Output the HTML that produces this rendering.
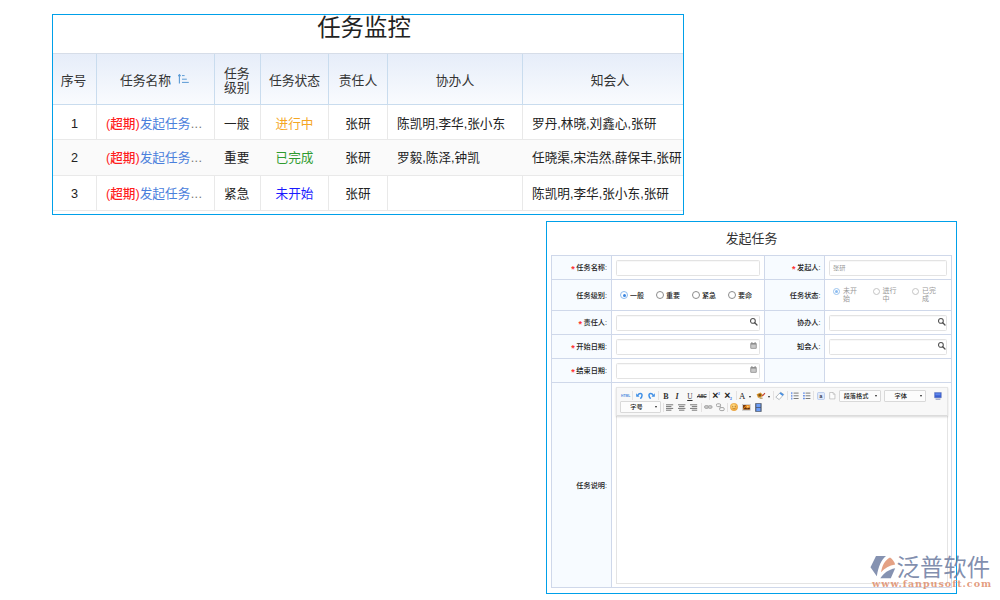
<!DOCTYPE html>
<html lang="zh-CN">
<head>
<meta charset="utf-8">
<title>任务监控</title>
<style>
*{box-sizing:border-box;margin:0;padding:0}
html,body{width:1000px;height:600px;overflow:hidden;background:#fff}
body{position:relative;font-family:"Liberation Sans","Noto Sans CJK SC",sans-serif;color:#333}
.abs{position:absolute}
/* ---------- monitor box ---------- */
#mon{position:absolute;left:52px;top:14px;width:632px;height:201px;border:1px solid #00a0e9;background:#fff;overflow:hidden}
#mon .title{position:absolute;left:0;top:0;width:622px;height:38px;text-align:center;font-size:23.4px;line-height:27px;color:#222;white-space:nowrap}
#mon .hd{position:absolute;left:0;top:38px;width:700px;height:52px;background:linear-gradient(#e6edf9,#f9fbfe);border-top:1px solid #d6dde8;border-bottom:1px solid #c9dcee}
#mon .hc{position:absolute;top:40px;height:51px;font-size:12.8px;line-height:15px;color:#333;display:flex;align-items:center;justify-content:center;text-align:center;white-space:nowrap}
#mon .vl{position:absolute;top:39px;width:1px;height:51px;background:#c9dcee}
#mon .vr{position:absolute;top:90px;width:1px;height:106px;background:#e9e9e9}
#mon .row{position:absolute;left:0;width:700px;height:35px;border-bottom:1px solid #e9e9e9}
#mon .c{position:absolute;height:35px;line-height:36px;font-size:12.65px;white-space:nowrap;color:#222}
#mon .r1 .c{line-height:38px}
#mon .ctr{text-align:center}
.red{color:#ff1f1f;font-weight:500}
.lnk{color:#4a80dc}
.el{color:#777;letter-spacing:.3px;margin-left:.5px}

/* ---------- form panel ---------- */
#fm{position:absolute;left:546px;top:221px;width:411px;height:373px;border:1px solid #00a0e9;background:#fff}
.ft{position:absolute;left:547px;top:222px;width:409px;height:33px;text-align:center;font-size:12.9px;line-height:33px;color:#333}
.hl{position:absolute;left:551px;width:401px;height:1px;background:#cfd8ea}
.vv{position:absolute;width:1px;background:#cfd8ea}
.lb{position:absolute;background:#f7fbff}
.lt{position:absolute;font-size:7.2px;line-height:10px;text-align:right;white-space:nowrap;color:#222;font-weight:500}
.lt i{font-style:normal;color:#f33;margin-right:1.5px;font-size:9px;font-weight:bold;line-height:5px;position:relative;top:1.8px}
.ip{position:absolute;height:16px;border:1px solid #e3e3e3;border-radius:1.5px;background:#fff;box-shadow:inset 0 1px 1px rgba(0,0,0,.03)}
.rd{position:absolute;width:8px;height:8px;border:1px solid #8c8c8c;border-radius:50%;background:#fff}
.rd.on{border-color:#8dbbee}
.rd.on::after{content:"";position:absolute;left:1.5px;top:1.5px;width:3px;height:3px;border-radius:50%;background:#3b86e0}
.rd.dis{border-color:#c4c4c4;width:7px;height:7px}
.rd.dis.on{border-color:#9cc4ee}
.rd.dis.on::after{background:#8dbcf0;left:1px;top:1px}
.rl{position:absolute;font-size:7px;line-height:8px;white-space:nowrap;color:#222;font-weight:500}
.rl.g{color:#999;font-weight:400;line-height:8.4px}

/* ---------- editor ---------- */
#ed{position:absolute;left:616px;top:387px;width:332px;height:197px;border:1px solid #e4e4e4;background:#fff}
#tb{position:absolute;left:616px;top:387px;width:332px;height:29px;background:#f8f8f8;border:1px solid #e6e6e6;border-bottom-color:#dcdcdc;box-shadow:0 1px 2px rgba(0,0,0,.16)}
.sp{position:absolute;width:1px;height:9px;background:#e3e1e1}
.tx{position:absolute;white-space:nowrap;color:#222;line-height:10px;height:10px}
.sf{font-family:"Liberation Serif","Noto Serif CJK SC",serif}
.dd{position:absolute;height:12px;border:1px solid #d9d9d9;background:#fcfcfc;border-radius:1px}
.dd b{position:absolute;top:0;left:0;right:8px;text-align:center;font-size:6.2px;line-height:10px;font-weight:500;color:#222;white-space:nowrap}
.dd i{position:absolute;right:3px;top:4px;width:0;height:0;border-left:1.6px solid transparent;border-right:1.6px solid transparent;border-top:2px solid #222}
.ar{position:absolute;width:0;height:0;border-left:1.6px solid transparent;border-right:1.6px solid transparent;border-top:2px solid #222}
</style>
</head>
<body>

<div id="mon">
  <div class="title">任务监控</div>
  <div class="hd"></div>
  <div class="hc" style="left:0;width:41px">序号</div>
  <div class="hc" style="left:44px;width:97px">任务名称</div>
  <svg class="abs" style="left:125px;top:59px" width="12" height="10" viewBox="0 0 12 10"><path d="M1.4 0.6V9.4M0.2 2.1 1.4 0.6 2.6 2.1" stroke="#5b9bd5" stroke-width="1.1" fill="none"/><path d="M4 1.6h2.6M4 5.2h4.8M4 8.4h6.8" stroke="#5b9bd5" stroke-width="1" fill="none"/></svg>
  <div class="hc" style="left:162px;width:45px;justify-content:flex-start;padding-left:9px;text-align:left;line-height:14px">任务<br>级别</div>
  <div class="hc" style="left:208px;width:67px">任务状态</div>
  <div class="hc" style="left:276px;width:58px">责任人</div>
  <div class="hc" style="left:335px;width:134px">协办人</div>
  <div class="hc" style="left:470px;width:174px">知会人</div>
  <div class="vl" style="left:43px"></div><div class="vl" style="left:161px"></div><div class="vl" style="left:207px"></div><div class="vl" style="left:275px"></div><div class="vl" style="left:334px"></div><div class="vl" style="left:469px"></div>
  <div class="vr" style="left:43px"></div><div class="vr" style="left:161px"></div><div class="vr" style="left:207px"></div><div class="vr" style="left:275px"></div><div class="vr" style="left:334px"></div><div class="vr" style="left:469px"></div>

  <div class="row r1" style="top:90px">
    <div class="c ctr" style="left:0;width:43px">1</div>
    <div class="c" style="left:53px"><span class="red">(超期)</span><span class="lnk">发起任务</span><span class="el">...</span></div>
    <div class="c" style="left:171px">一般</div>
    <div class="c ctr" style="left:208px;width:67px;color:#f5a623">进行中</div>
    <div class="c ctr" style="left:276px;width:58px">张研</div>
    <div class="c" style="left:344px">陈凯明,李华,张小东</div>
    <div class="c" style="left:479px">罗丹,林晓,刘鑫心,张研</div>
  </div>
  <div class="row" style="top:125px;height:36px;background:#fafafa">
    <div class="c ctr" style="left:0;width:43px">2</div>
    <div class="c" style="left:53px"><span class="red">(超期)</span><span class="lnk">发起任务</span><span class="el">...</span></div>
    <div class="c" style="left:171px">重要</div>
    <div class="c ctr" style="left:208px;width:67px;color:#2e9a2e">已完成</div>
    <div class="c ctr" style="left:276px;width:58px">张研</div>
    <div class="c" style="left:344px">罗毅,陈泽,钟凯</div>
    <div class="c" style="left:479px">任晓渠,宋浩然,薛保丰,张研</div>
  </div>
  <div class="row" style="top:161px">
    <div class="c ctr" style="left:0;width:43px">3</div>
    <div class="c" style="left:53px"><span class="red">(超期)</span><span class="lnk">发起任务</span><span class="el">...</span></div>
    <div class="c" style="left:171px">紧急</div>
    <div class="c ctr" style="left:208px;width:67px;color:#1a1aff">未开始</div>
    <div class="c ctr" style="left:276px;width:58px">张研</div>
    <div class="c" style="left:344px"></div>
    <div class="c" style="left:479px">陈凯明,李华,张小东,张研</div>
  </div>
</div>


<div id="fm"></div>
<div class="ft">发起任务</div>

<!-- label backgrounds -->
<div class="lb" style="left:552px;top:256px;width:59px;height:331px"></div>
<div class="lb" style="left:765px;top:256px;width:59px;height:126px"></div>
<!-- grid lines -->
<div class="hl" style="top:255px"></div>
<div class="hl" style="top:279px"></div>
<div class="hl" style="top:310px"></div>
<div class="hl" style="top:334px"></div>
<div class="hl" style="top:358px"></div>
<div class="hl" style="top:382px"></div>
<div class="hl" style="top:587px"></div>
<div class="vv" style="left:551px;top:255px;height:333px"></div>
<div class="vv" style="left:611px;top:255px;height:333px"></div>
<div class="vv" style="left:764px;top:255px;height:128px"></div>
<div class="vv" style="left:824px;top:255px;height:128px"></div>
<div class="vv" style="left:951px;top:255px;height:333px"></div>

<!-- left labels -->
<div class="lt" style="left:552px;width:55px;top:262.8px"><i>*</i>任务名称:</div>
<div class="lt" style="left:552px;width:55px;top:290.8px">任务级别:</div>
<div class="lt" style="left:552px;width:55px;top:318.3px"><i>*</i>责任人:</div>
<div class="lt" style="left:552px;width:55px;top:342.3px"><i>*</i>开始日期:</div>
<div class="lt" style="left:552px;width:55px;top:366.3px"><i>*</i>结束日期:</div>
<div class="lt" style="left:552px;width:55px;top:480.8px">任务说明:</div>
<!-- right labels -->
<div class="lt" style="left:765px;width:55.5px;top:262.8px"><i>*</i>发起人:</div>
<div class="lt" style="left:765px;width:55.5px;top:290.8px">任务状态:</div>
<div class="lt" style="left:765px;width:55.5px;top:318.3px">协办人:</div>
<div class="lt" style="left:765px;width:55.5px;top:342.3px">知会人:</div>

<!-- inputs -->
<div class="ip" style="left:616px;top:260px;width:144px"></div>
<div class="ip" style="left:616px;top:315px;width:144px"></div>
<div class="ip" style="left:616px;top:339px;width:144px"></div>
<div class="ip" style="left:616px;top:363px;width:144px"></div>
<div class="ip" style="left:829px;top:260px;width:118px"><span style="position:absolute;left:3px;top:2px;font-size:6.2px;line-height:10px;color:#999">张研</span></div>
<div class="ip" style="left:829px;top:315px;width:118px"></div>
<div class="ip" style="left:829px;top:339px;width:118px"></div>

<!-- input icons -->
<svg class="abs" style="left:749px;top:317px" width="10" height="10" viewBox="0 0 10 10"><circle cx="3.9" cy="3.9" r="2.4" fill="none" stroke="#505050" stroke-width="1.05"/><path d="M5.7 5.7L8 8" stroke="#505050" stroke-width="1.25" stroke-linecap="round"/></svg>
<svg class="abs" style="left:936.5px;top:317px" width="10" height="10" viewBox="0 0 10 10"><circle cx="3.9" cy="3.9" r="2.4" fill="none" stroke="#505050" stroke-width="1.05"/><path d="M5.7 5.7L8 8" stroke="#505050" stroke-width="1.25" stroke-linecap="round"/></svg>
<svg class="abs" style="left:936.5px;top:341px" width="10" height="10" viewBox="0 0 10 10"><circle cx="3.9" cy="3.9" r="2.4" fill="none" stroke="#505050" stroke-width="1.05"/><path d="M5.7 5.7L8 8" stroke="#505050" stroke-width="1.25" stroke-linecap="round"/></svg>
<svg class="abs" style="left:750px;top:342px" width="7" height="7" viewBox="0 0 7 7"><rect x="0.3" y="1" width="6.4" height="5.7" rx="0.8" fill="#8f8f8f"/><rect x="1.2" y="2.6" width="4.6" height="3.3" fill="#c9c9c9"/><rect x="1.4" y="0" width="1" height="1.8" fill="#8f8f8f"/><rect x="4.6" y="0" width="1" height="1.8" fill="#8f8f8f"/></svg>
<svg class="abs" style="left:750px;top:366px" width="7" height="7" viewBox="0 0 7 7"><rect x="0.3" y="1" width="6.4" height="5.7" rx="0.8" fill="#8f8f8f"/><rect x="1.2" y="2.6" width="4.6" height="3.3" fill="#c9c9c9"/><rect x="1.4" y="0" width="1" height="1.8" fill="#8f8f8f"/><rect x="4.6" y="0" width="1" height="1.8" fill="#8f8f8f"/></svg>

<!-- radios: level -->
<div class="rd on" style="left:620px;top:291px"></div><div class="rl" style="left:630px;top:292px">一般</div>
<div class="rd" style="left:656px;top:291px"></div><div class="rl" style="left:666px;top:292px">重要</div>
<div class="rd" style="left:692px;top:291px"></div><div class="rl" style="left:702px;top:292px">紧急</div>
<div class="rd" style="left:728px;top:291px"></div><div class="rl" style="left:738px;top:292px">要命</div>
<!-- radios: status -->
<div class="rd dis on" style="left:833px;top:287.5px"></div><div class="rl g" style="left:843px;top:287px">未开<br>始</div>
<div class="rd dis" style="left:872.5px;top:287.5px"></div><div class="rl g" style="left:882.6px;top:287px">进行<br>中</div>
<div class="rd dis" style="left:912px;top:287.5px"></div><div class="rl g" style="left:922px;top:287px">已完<br>成</div>


<div id="ed"></div>
<div id="tb"></div>
<!-- toolbar row 1 -->
<div class="tx" style="left:621px;top:391px;font-size:3.3px;font-weight:bold;color:#4a8ade;letter-spacing:0">HTML</div>
<div class="sp" style="left:632px;top:391px"></div>
<svg class="abs" style="left:635.6px;top:392px" width="7" height="7" viewBox="0 0 7 7"><path d="M.2 1.300V4.700H3.500z" fill="#3f8fe6"/><path d="M1.900 3.500C3 .8 6.200 1 6 3.500 5.900 5 5.200 6 4.300 6.700" fill="none" stroke="#3f8fe6" stroke-width="1.500"/></svg>
<svg class="abs" style="left:648px;top:392px" width="7" height="7" viewBox="0 0 7 7"><path d="M6.800 1.300V4.700H3.500z" fill="#3f8fe6"/><path d="M5.100 3.500C4 .8 .8 1 1 3.500 1.100 5 1.800 6 2.700 6.700" fill="none" stroke="#3f8fe6" stroke-width="1.500"/></svg>
<div class="sp" style="left:658px;top:391px"></div>
<div class="tx sf" style="left:663.2px;top:391.8px;font-size:8px;font-weight:bold;color:#333">B</div>
<div class="tx sf" style="left:675.6px;top:391.8px;font-size:8px;font-weight:bold;font-style:italic;color:#333">I</div>
<div class="tx sf" style="left:687.2px;top:392px;font-size:7.4px;text-decoration:underline;text-decoration-thickness:.5px;text-underline-offset:.6px;color:#333">U</div>
<div class="tx" style="left:697px;top:391.6px;font-size:4.7px;font-weight:bold;font-style:italic;text-decoration:line-through;text-decoration-thickness:.5px;color:#444;letter-spacing:-.2px">ABC</div>
<div class="sp" style="left:709px;top:391px"></div>
<div class="tx" style="left:712.2px;top:390.2px;font-size:10.5px;font-weight:bold;color:#222">×<span style="font-size:3.4px;color:#2f6fe0;position:relative;top:-4.2px;left:-.4px">2</span></div>
<div class="tx" style="left:724.2px;top:390.2px;font-size:10.5px;font-weight:bold;color:#222">×<span style="font-size:3.4px;color:#2f6fe0;position:relative;top:.6px;left:-.4px">2</span></div>
<div class="sp" style="left:735.5px;top:391px"></div>
<div class="tx sf" style="left:739px;top:391px;font-size:8.8px;color:#222">A</div>
<div class="ar" style="left:749px;top:396px"></div>
<svg class="abs" style="left:756px;top:391px" width="10" height="9" viewBox="0 0 10 9"><path d="M0.6 3.2 4.6 1.6 6.8 3.8 5.2 6.6 2 6.8z" fill="#d8922a"/><path d="M2.2 3.6 4.4 2.8 5.4 4 4.4 5.6 2.8 5.6z" fill="#7a5214"/><path d="M6.2 5.2 9 2.2" stroke="#c0392b" stroke-width="1.1"/><path d="M3.6 7.2h3" stroke="#8a6a2a" stroke-width=".8"/></svg>
<div class="ar" style="left:767.5px;top:396px"></div>
<div class="sp" style="left:773px;top:391px"></div>
<svg class="abs" style="left:774.6px;top:390.6px" width="10" height="10" viewBox="0 0 10 10"><path d="M0.8 6.2 5.6 1.2 8.8 3.4 4.2 8.6z" fill="#fff" stroke="#9aa0a8" stroke-width=".7"/><path d="M4.4 2.5 5.6 1.2 8.8 3.4 7.5 4.9z" fill="#4a90e2"/></svg>
<div class="sp" style="left:787px;top:391px"></div>
<svg class="abs" style="left:791px;top:392.2px" width="8" height="8" viewBox="0 0 8 8"><path d="M.8 .2v1.900M.8 2.900v1.900M.8 5.600v1.900" stroke="#4a7be6" stroke-width="1"/><path d="M2.600 1.100h5M2.600 3.800h5M2.600 6.500h5" stroke="#666" stroke-width=".85"/></svg>
<svg class="abs" style="left:803px;top:392.2px" width="8" height="8" viewBox="0 0 8 8"><path d="M.2 1.100h1.500M.2 3.800h1.500M.2 6.500h1.500" stroke="#4a7be6" stroke-width="1.400"/><path d="M2.600 1.100h4.800M2.600 3.800h4.800M2.600 6.500h4.800" stroke="#666" stroke-width=".85"/></svg>
<div class="sp" style="left:813.4px;top:391px"></div>
<svg class="abs" style="left:817px;top:391.5px" width="8" height="8" viewBox="0 0 8 8"><rect x=".5" y=".5" width="7" height="7" rx="1" fill="#dfe9fb" stroke="#a9bfe6" stroke-width=".7"/><text x="4" y="5.9" font-size="5" font-weight="bold" text-anchor="middle" fill="#334" font-family="Liberation Sans, sans-serif">a</text></svg>
<svg class="abs" style="left:829.2px;top:392.300px" width="6.600" height="7.400" viewBox="0 0 8 9"><path d="M.8 .6h4.2l2.2 2.2v5.6H.8z" fill="#fdfdfd" stroke="#a8a8a8" stroke-width=".7"/><path d="M5 .6v2.2h2.2" fill="none" stroke="#a8a8a8" stroke-width=".6"/></svg>
<div class="dd" style="left:839px;top:390px;width:42px"><b>段落格式</b><i></i></div>
<div class="dd" style="left:884px;top:390px;width:41.5px"><b>字体</b><i></i></div>
<svg class="abs" style="left:934px;top:392px" width="8" height="8" viewBox="0 0 8 8"><rect x=".3" y=".3" width="7.2" height="5.6" rx=".6" fill="#3b5fd0" stroke="#9aa6c8" stroke-width=".6"/><rect x="1.4" y="1.3" width="5" height="2" fill="#5f86ea"/><path d="M1.6 7.2h4.8" stroke="#7a86b0" stroke-width=".9"/></svg>
<!-- toolbar row 2 -->
<div class="dd" style="left:620px;top:401px;width:41px"><b>字号</b><i></i></div>
<div class="sp" style="left:663px;top:402.5px"></div>
<svg class="abs" style="left:666px;top:403.6px" width="8" height="7" viewBox="0 0 8 7"><path d="M0 .8h7.2M0 2.6h5.4M0 4.4h7.2M0 6.2h5.4" stroke="#555" stroke-width=".8"/></svg>
<svg class="abs" style="left:678px;top:403.6px" width="8" height="7" viewBox="0 0 8 7"><path d="M0 .8h7.4M1 2.6h5.4M0 4.400h7.4M1 6.2h5.4" stroke="#555" stroke-width=".8"/></svg>
<svg class="abs" style="left:690px;top:403.6px" width="8" height="7" viewBox="0 0 8 7"><path d="M0 .8h7.2M1.800 2.6h5.4M0 4.4h7.2M1.800 6.2h5.4" stroke="#555" stroke-width=".8"/></svg>
<div class="sp" style="left:701px;top:402.5px"></div>
<svg class="abs" style="left:703.6px;top:404px" width="9" height="6" viewBox="0 0 9 6"><rect x=".5" y="1.6" width="4" height="2.8" rx="1.4" fill="#c9c9c9" stroke="#9d9d9d" stroke-width=".8"/><rect x="4.100" y="1.6" width="4" height="2.8" rx="1.4" fill="#c9c9c9" stroke="#9d9d9d" stroke-width=".8"/></svg>
<svg class="abs" style="left:716px;top:402.5px" width="9" height="9" viewBox="0 0 9 9"><rect x=".4" y=".8" width="4.2" height="2.8" rx="1.2" fill="none" stroke="#a3a3a3" stroke-width="1"/><rect x="3.6" y="4.6" width="4.6" height="3" rx="1.2" fill="none" stroke="#a3a3a3" stroke-width="1"/><path d="M4.2 2.4v3" stroke="#a3a3a3" stroke-width=".9"/></svg>
<div class="sp" style="left:727px;top:402.5px"></div>
<svg class="abs" style="left:730px;top:403px" width="8" height="8" viewBox="0 0 8 8"><defs><radialGradient id="sm" cx=".4" cy=".35" r=".7"><stop offset="0" stop-color="#ffe08a"/><stop offset="1" stop-color="#f0a02c"/></radialGradient></defs><circle cx="4" cy="4" r="3.7" fill="url(#sm)" stroke="#e39a35" stroke-width=".5"/><circle cx="2.8" cy="3.2" r=".5" fill="#8a4b10"/><circle cx="5.2" cy="3.2" r=".5" fill="#8a4b10"/><path d="M2.4 5c.8 1 2.4 1 3.2 0" stroke="#8a4b10" stroke-width=".5" fill="none"/></svg>
<svg class="abs" style="left:742px;top:403.5px" width="9" height="7" viewBox="0 0 9 7"><rect x=".3" y=".3" width="8.2" height="6.2" fill="#e8e8e8" stroke="#b5b5b5" stroke-width=".5"/><rect x="1" y="1" width="6.8" height="4.4" fill="#e8891f"/><path d="M1 1h3.200L1 4.600z" fill="#7a3d10"/><path d="M1 5.400 3.400 3.200 5 4.400 7.800 3.600v1.800z" fill="#5a2d0c"/><circle cx="5.800" cy="2.600" r=".9" fill="#ffd27a"/></svg>
<svg class="abs" style="left:755px;top:402.5px" width="7" height="9" viewBox="0 0 7 9"><rect x=".2" y=".2" width="6.4" height="8.6" fill="#4a5568"/><rect x="1.3" y=".9" width="4.2" height="3.2" fill="#6b9cf5"/><rect x="1.3" y="4.9" width="4.2" height="3.2" fill="#6b9cf5"/></svg>


<svg class="abs" style="left:868px;top:553px" width="30" height="28" viewBox="0 0 30 28">
  <path d="M2.5 14.2 8 3h10C13.5 6.5 10.5 13 8.8 23.2z" fill="rgba(112,127,163,.85)"/>
  <path d="M22 4.4c2.4 1.6 4.2 4 5.2 7-6 .8-10.600 3.600-14.200 7.900C14 12.400 17 7 22 4.400z" fill="rgba(222,140,105,.82)"/>
  <path d="M27.200 15.200 22.800 25.200H12.300c3.400-5.200 8-8.600 14.900-10z" fill="rgba(112,127,163,.85)"/>
</svg>
<div class="abs" style="left:896.5px;top:554px;font-size:23.4px;line-height:28px;height:28px;white-space:nowrap;color:rgba(108,123,160,.86);letter-spacing:0px;font-weight:400">泛普软件</div>
<div class="abs" style="left:872px;top:577px;font-family:'DejaVu Serif','Liberation Serif',serif;font-size:9.6px;line-height:14px;height:14px;white-space:nowrap;color:rgba(222,140,105,.85);font-weight:bold;letter-spacing:.93px">www.fanpusoft.com</div>



</body>
</html>
